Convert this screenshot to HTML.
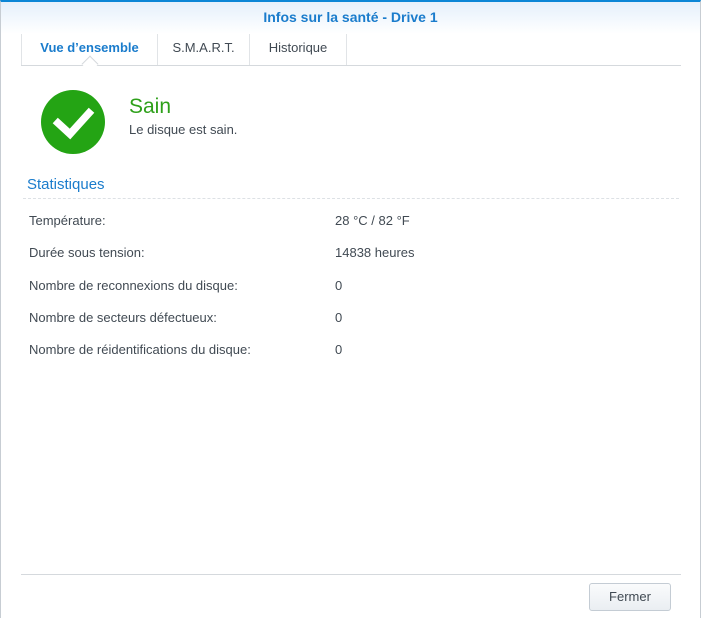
<!DOCTYPE html>
<html><head><meta charset="utf-8"><style>
*{margin:0;padding:0;box-sizing:border-box}
body{width:701px;height:618px;overflow:hidden;background:#fff;font-family:"Liberation Sans",sans-serif;font-size:13px;color:#414a53;position:relative}
.frame{position:absolute;left:0;top:0;width:701px;height:618px;border-left:1px solid #c7cdd3;border-right:1px solid #c7cdd3;border-top:2px solid #0b86d6}
.hdr{position:absolute;left:1px;right:1px;top:2px;height:32px;background:linear-gradient(#e5f0fb,#fff);text-align:center;font-weight:bold;color:#1a7ccc;font-size:14px;line-height:30px}
.tabs{position:absolute;left:21px;top:34px;width:660px;height:32px;border-bottom:1px solid #d5d9dd;background:#fff}
.tab{position:absolute;top:0;height:31px;line-height:27px;font-size:13px;color:#414a53;text-align:center;border-right:1px solid #e1e4e7}
.arrow{position:absolute;left:84px;top:58px;width:12px;height:12px;background:#fff;border-left:1px solid #d5d9dd;border-top:1px solid #d5d9dd;transform:rotate(45deg)}
.row{position:absolute;left:29px;font-size:13px;color:#414a53}
.val{position:absolute;left:335px;font-size:13px;color:#414a53}
</style></head><body>
<div class="frame"></div>
<div class="hdr">Infos sur la santé - Drive 1</div>
<div class="tabs">
<div class="tab" style="left:0;width:137px;color:#1a7ccc;font-weight:bold;border-left:1px solid #e1e4e7">Vue d’ensemble</div>
<div class="tab" style="left:137px;width:92px">S.M.A.R.T.</div>
<div class="tab" style="left:229px;width:97px">Historique</div>
</div>
<div class="arrow"></div>
<svg style="position:absolute;left:41px;top:90px" width="64" height="64" viewBox="0 0 64 64"><circle cx="32" cy="32" r="32" fill="#24a414"/><path d="M17 33 L29 44 L48 23" fill="none" stroke="#fff" stroke-width="7.5" stroke-linecap="square"/></svg>
<div style="position:absolute;left:129px;top:95px;font-size:21px;color:#2ea01a">Sain</div>
<div style="position:absolute;left:129px;top:122px;font-size:13px;color:#414a53">Le disque est sain.</div>
<div style="position:absolute;left:27px;top:176px;font-size:15px;color:#1a7ccc">Statistiques</div>
<div style="position:absolute;left:23px;top:198px;width:656px;border-top:1px dashed #dde1e5"></div>
<div class="row" style="top:213px">Température:</div><div class="val" style="top:213px">28 °C / 82 °F</div>
<div class="row" style="top:245px">Durée sous tension:</div><div class="val" style="top:245px">14838 heures</div>
<div class="row" style="top:278px">Nombre de reconnexions du disque:</div><div class="val" style="top:278px">0</div>
<div class="row" style="top:310px">Nombre de secteurs défectueux:</div><div class="val" style="top:310px">0</div>
<div class="row" style="top:342px">Nombre de réidentifications du disque:</div><div class="val" style="top:342px">0</div>
<div style="position:absolute;left:21px;top:574px;width:660px;border-top:1px solid #d5d9dd"></div>
<div style="position:absolute;left:589px;top:583px;width:82px;height:28px;border:1px solid #c4ccd4;border-radius:3px;background:linear-gradient(#fafbfc,#eaeef2);text-align:center;line-height:26px;font-size:13px;color:#414a53">Fermer</div>
</body></html>
